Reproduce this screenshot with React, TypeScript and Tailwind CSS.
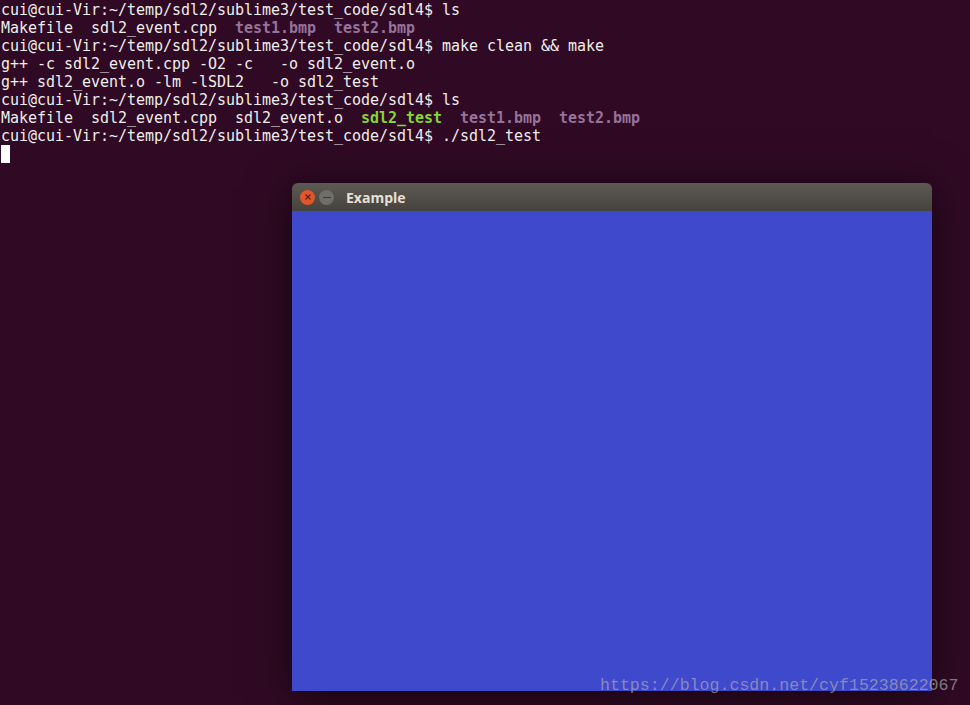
import type { ReactNode } from 'react'

const prompt = 'cui@cui-Vir:~/temp/sdl2/sublime3/test_code/sdl4$ '

function Bmp({ children }: { children: ReactNode }) {
  return <span className="font-bold text-[#95739b]">{children}</span>
}

function Terminal() {
  return (
    <div className="whitespace-pre pl-[1px] pt-[1px] font-['DejaVu_Sans_Mono',monospace] text-[15px] leading-[18px] tracking-[-0.03px] text-[#eeeeec]">
      <div>{prompt}ls</div>
      <div>
        Makefile  sdl2_event.cpp  <Bmp>test1.bmp</Bmp>  <Bmp>test2.bmp</Bmp>
      </div>
      <div>{prompt}make clean &amp;&amp; make</div>
      <div>g++ -c sdl2_event.cpp -O2 -c   -o sdl2_event.o</div>
      <div>g++ sdl2_event.o -lm -lSDL2   -o sdl2_test</div>
      <div>{prompt}ls</div>
      <div>
        Makefile  sdl2_event.cpp  sdl2_event.o  <span className="font-bold text-[#82d82f]">sdl2_test</span>  <Bmp>test1.bmp</Bmp>  <Bmp>test2.bmp</Bmp>
      </div>
      <div>{prompt}./sdl2_test</div>
      <div className="h-[18px] w-[9px] bg-white" />
    </div>
  )
}

function ExampleWindow() {
  return (
    <div className="absolute left-[292px] top-[183px] flex h-[508px] w-[640px] flex-col shadow-[0_4px_40px_rgba(0,0,0,0.6)]">
      <div className="flex h-[28px] items-center rounded-t-[6px] bg-gradient-to-b from-[#5c5a52] to-[#45433d]">
        <div className="ml-[8px] flex h-[15px] w-[15px] items-center justify-center rounded-full bg-[#e2562a]">
          <svg width="8" height="8" viewBox="0 0 8 8">
            <path d="M1.5 1.5L6.5 6.5M6.5 1.5L1.5 6.5" stroke="#5a2414" strokeWidth="1.2" />
          </svg>
        </div>
        <div className="ml-[4px] flex h-[15px] w-[15px] items-center justify-center rounded-full bg-[#706e68]">
          <div className="h-[1px] w-[8px] bg-[#3a3934]" />
        </div>
        <div className="ml-[12px] font-['Open_Sans',sans-serif] text-[14px] font-bold text-[#e4e0d8]">Example</div>
      </div>
      <div className="flex-1 bg-[#3f49cc]" />
    </div>
  )
}

export default function App() {
  return (
    <div className="relative h-[705px] w-[970px] overflow-hidden bg-[#300a24]">
      <Terminal />
      <ExampleWindow />
      <div className="absolute left-[600px] top-[676px] whitespace-pre font-['Liberation_Mono',monospace] text-[16.6px] leading-[20px] text-[#a8a8b0]/70">
        https://blog.csdn.net/cyf15238622067
      </div>
    </div>
  )
}
